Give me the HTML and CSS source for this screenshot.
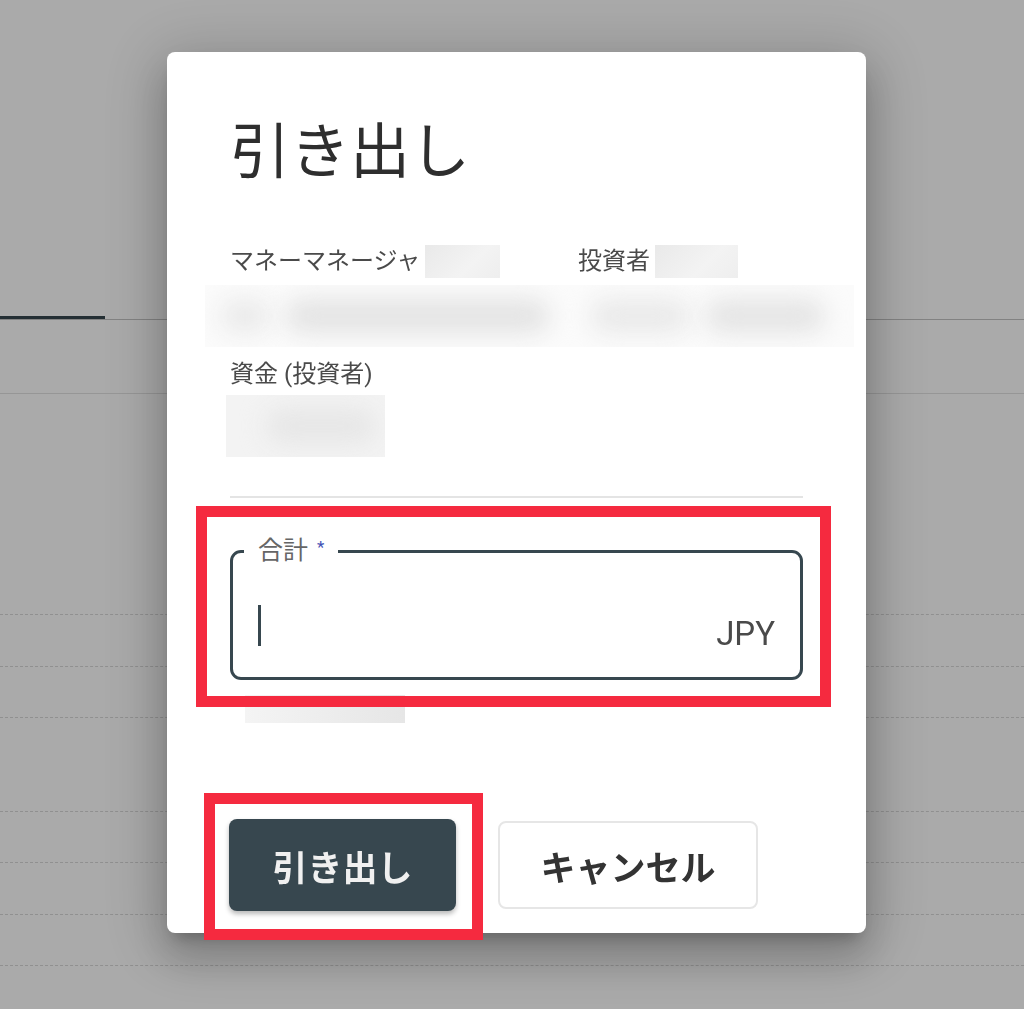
FILE: index.html
```html
<!DOCTYPE html>
<html lang="ja">
<head>
<meta charset="utf-8">
<title>引き出し</title>
<link rel="stylesheet" href="styles.css">
</head>
<body>
<div class="page">
  <div class="tabs"><div class="tab-ind"></div></div>
  <div class="thead"></div>
  <div class="tbody">
    <div class="spacer"></div>
    <div class="row h52"></div>
    <div class="row h51"></div>
    <div class="row h94"></div>
    <div class="row h51"></div>
    <div class="row h52"></div>
    <div class="row h51"></div>
    <div class="row h52"></div>
  </div>
</div>
<div class="overlay">
  <div class="dialog">
    <h1 class="title">引き出し</h1>
    <div class="info-grid">
      <div class="info-label">マネーマネージャ<span class="mask mask-a"></span></div>
      <div class="info-label">投資者<span class="mask mask-b"></span></div>
    </div>
    <div class="blur-row">
      <span class="blob b1"></span>
      <span class="blob b2"></span>
      <span class="blob b3"></span>
      <span class="blob b4"></span>
    </div>
    <div class="fund-label">資金 (投資者)</div>
    <div class="blur-box"><span class="blob b5"></span></div>
    <div class="divider"></div>
    <div class="field">
      <span class="legend">合計<span class="req">*</span></span>
      <span class="caret"></span>
      <span class="suffix">JPY</span>
    </div>
    <div class="helper-mask"></div>
    <div class="actions">
      <button class="btn primary">引き出し</button>
      <button class="btn secondary">キャンセル</button>
    </div>
    <div class="mark mark-field"></div>
    <div class="mark mark-btn"></div>
  </div>
</div>
</body>
</html>
```

FILE: styles.css
```css
html, body {
  margin: 0;
  padding: 0;
}
body {
  background: #ffffff;
  font-family: Roboto, "Noto Sans CJK JP", sans-serif;
  overflow: hidden;
}
.page {
  width: 1024px;
  height: 1009px;
}
.tabs {
  height: 319px;
  border-bottom: 1px solid #c4c4c4;
  display: flex;
  align-items: flex-end;
}
.tab-ind {
  width: 105px;
  height: 3px;
  background: #37474f;
}
.thead {
  height: 73px;
  border-bottom: 1px solid #e2e2e2;
}
.spacer {
  height: 220px;
}
.row {
  border-top: 1px dashed #d8d8d8;
  box-sizing: border-box;
}
.h51 { height: 51px; }
.h52 { height: 52px; }
.h94 { height: 94px; }

.overlay {
  position: fixed;
  inset: 0;
  background: rgba(0, 0, 0, 0.335);
  padding: 52px 0 0 167px;
  box-sizing: border-box;
}
.dialog {
  position: relative;
  width: 699px;
  box-sizing: border-box;
  padding: 59px 63px 22px 63px;
  background: #ffffff;
  border-radius: 8px;
  box-shadow: 0 11px 15px -7px rgba(0,0,0,.22), 0 24px 38px 3px rgba(0,0,0,.16), 0 9px 60px 14px rgba(0,0,0,.16);
}
.title {
  margin: 0 0 62px 0;
  font-family: "Noto Sans CJK JP", sans-serif;
  font-size: 60px;
  line-height: 72px;
  font-weight: 400;
  color: #2e2e2e;
}
.info-grid {
  display: grid;
  grid-template-columns: 348px 1fr;
  height: 33px;
}
.info-label {
  display: flex;
  align-items: center;
  font-size: 24px;
  line-height: 33px;
  color: #4a4a4a;
}
.mask {
  display: block;
  height: 33px;
  margin-left: 5px;
  background: linear-gradient(135deg, #e9e9e9, #f3f3f3 60%, #eeeeee);
}
.mask-a { width: 75px; }
.mask-b { width: 83px; }
.blur-row {
  margin: 7px -51px 0 -25px;
  height: 62px;
  background: #fbfbfb;
  display: flex;
  align-items: center;
  overflow: hidden;
}
.blob {
  display: block;
  height: 34px;
  filter: blur(12px);
  border-radius: 17px;
}
.b1 { margin-left: 15px; width: 50px; background: #eaeaea; }
.b2 { margin-left: 15px; width: 265px; background: #e3e3e3; }
.b3 { margin-left: 40px; width: 100px; background: #e9e9e9; }
.b4 { margin-left: 15px; width: 120px; background: #e4e4e4; }
.fund-label {
  margin-top: 11px;
  font-size: 24px;
  line-height: 32px;
  color: #4a4a4a;
}
.blur-box {
  margin: 5px 0 0 -4px;
  width: 159px;
  height: 62px;
  background: #f3f3f3;
  display: flex;
  align-items: center;
  overflow: hidden;
}
.b5 { margin-left: 40px; width: 110px; background: #e6e6e6; }
.divider {
  margin-top: 39px;
  height: 2px;
  background: #e4e4e4;
}
.field {
  position: relative;
  margin-top: 52px;
  height: 130px;
  box-sizing: border-box;
  border: 3px solid #37474f;
  border-radius: 11px;
  display: flex;
  align-items: flex-end;
  padding: 0 25px 31px 25px;
}
.legend {
  position: absolute;
  left: 11px;
  top: -17px;
  padding: 0 14px;
  background: #ffffff;
  font-size: 25px;
  line-height: 30px;
  color: #666666;
  display: flex;
  align-items: flex-start;
}
.req {
  margin-left: 9px;
  font-size: 17px;
  line-height: 22px;
  color: #3f51b5;
}
.caret {
  display: block;
  width: 3px;
  height: 41px;
  background: #37474f;
}
.suffix {
  margin-left: auto;
  margin-bottom: -5px;
  font-size: 33px;
  line-height: 34px;
  color: #4a4a4a;
}
.helper-mask {
  margin: 15px 0 0 15px;
  width: 160px;
  height: 28px;
  background: linear-gradient(90deg, #f4f4f4, #e6e6e6);
}
.actions {
  margin-top: 96px;
  display: flex;
  align-items: center;
  gap: 42px;
}
.btn {
  font-family: "Noto Sans CJK JP", sans-serif;
  font-size: 35px;
  font-weight: 700;
  border-radius: 8px;
  padding: 0;
  cursor: pointer;
}
.primary {
  margin-left: -1px;
  width: 227px;
  height: 92px;
  background: #37474f;
  color: #f0f0f0;
  border: none;
  box-shadow: 0 3px 5px rgba(0,0,0,.28);
}
.secondary {
  width: 260px;
  height: 88px;
  background: #ffffff;
  color: #333333;
  border: 2px solid #e6e6e6;
}
.mark {
  position: absolute;
  box-sizing: border-box;
  border: 11px solid #f52a3f;
}
.mark-field {
  left: 29px;
  top: 454px;
  width: 635px;
  height: 201px;
}
.mark-btn {
  left: 37px;
  top: 741px;
  width: 279px;
  height: 147px;
}
```
